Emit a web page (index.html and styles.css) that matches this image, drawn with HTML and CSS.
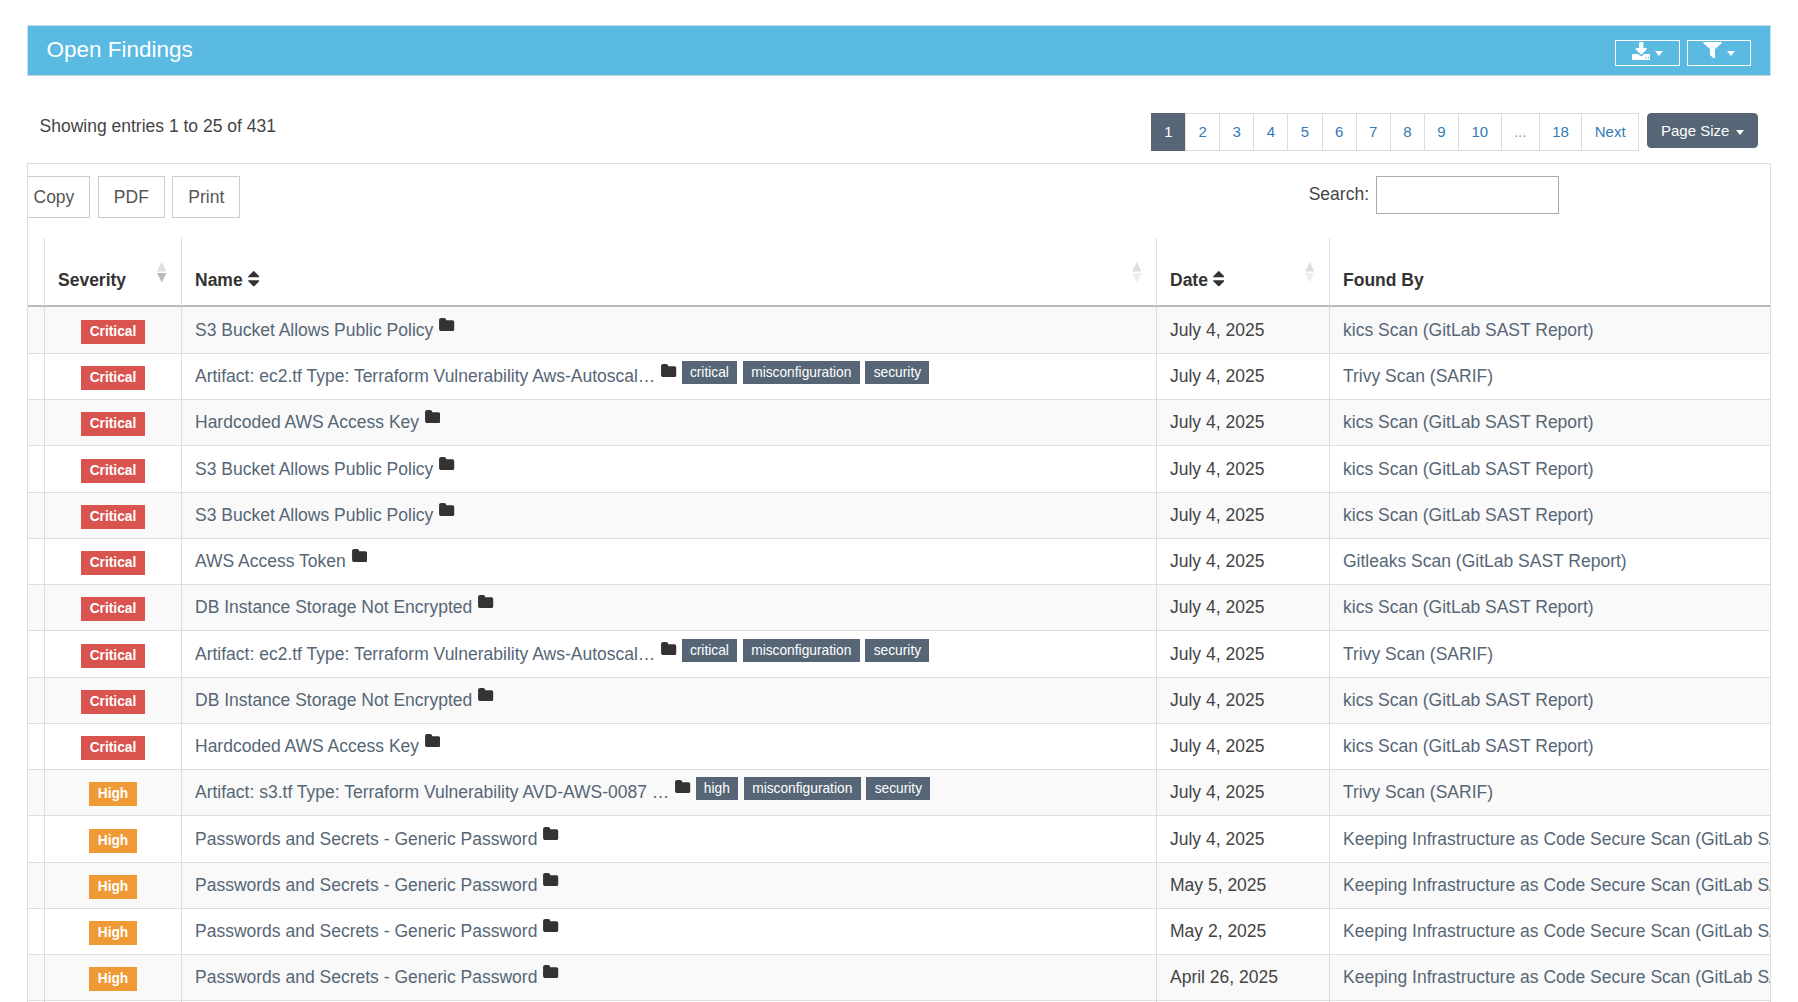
FILE: index.html
```html
<!DOCTYPE html>
<html lang="en">

<head>
  <meta charset="UTF-8">
  <title>Open Findings</title>
  <link rel="stylesheet" href="styles.css">
</head>

<body>
  <svg class="sprite" aria-hidden="true">
    <symbol id="i-folder" viewBox="64 128 1664 1408"><path d="M1728 608v704q0 92-66 158t-158 66h-1216q-92 0-158-66t-66-158v-960q0-92 66-158t158-66h320q92 0 158 66t66 158v32h672q92 0 158 66t66 158z"/></symbol>
    <symbol id="i-sort" viewBox="384 192 1024 1408"><path d="M1408 1088q0 26-19 45l-448 448q-19 19-45 19t-45-19l-448-448q-19-19-19-45t19-45 45-19h896q26 0 45 19t19 45zm0-384q0 26-19 45t-45 19h-896q-26 0-45-19t-19-45 19-45l448-448q19-19 45-19t45 19l448 448q19 19 19 45z"/></symbol>
    <symbol id="i-download" viewBox="64 0 1664 1536" preserveAspectRatio="none"><path d="M1344 1344q0-26-19-45t-45-19-45 19-19 45 19 45 45 19 45-19 19-45zm256 0q0-26-19-45t-45-19-45 19-19 45 19 45 45 19 45-19 19-45zm128-224v320q0 40-28 68t-68 28h-1472q-40 0-68-28t-28-68v-320q0-40 28-68t68-28h465l135 136q58 56 136 56t136-56l136-136h464q40 0 68 28t28 68zm-325-569q17 41-14 70l-448 448q-18 19-45 19t-45-19l-448-448q-31-29-14-70 17-39 59-39h256v-448q0-26 19-45t45-19h256q26 0 45 19t19 45v448h256q42 0 59 39z"/></symbol>
    <symbol id="i-filter" viewBox="183 256 1426 1408" preserveAspectRatio="none"><path d="M1595 295q17 41-14 70l-493 493v742q0 42-39 59-13 5-25 5-27 0-45-19l-256-256q-19-19-19-45v-486l-493-493q-31-29-14-70 17-39 59-39h1280q42 0 59 39z"/></symbol>
  </svg>

  <div class="page">
    <div class="panel-heading">
      <h3 class="panel-title">Open Findings</h3>
      <div class="panel-actions">
        <button class="outline-btn"><svg class="icon-download"><use href="#i-download"/></svg><span class="caret"></span></button>
        <button class="outline-btn"><svg class="icon-filter"><use href="#i-filter"/></svg><span class="caret"></span></button>
      </div>
    </div>

    <div class="paging-bar">
      <div class="entries">Showing entries 1 to 25 of 431</div>
      <ul class="pagination">
        <li class="active"><a href="#">1</a></li>
        <li><a href="#">2</a></li>
        <li><a href="#">3</a></li>
        <li><a href="#">4</a></li>
        <li><a href="#">5</a></li>
        <li><a href="#">6</a></li>
        <li><a href="#">7</a></li>
        <li><a href="#">8</a></li>
        <li><a href="#">9</a></li>
        <li><a href="#">10</a></li>
        <li class="muted"><a href="#">...</a></li>
        <li><a href="#">18</a></li>
        <li><a href="#">Next</a></li>
      </ul>
      <button class="page-size">Page Size <span class="caret"></span></button>
    </div>

    <div class="table-box">
      <div class="table-tools">
        <div class="export-btns">
          <button class="export-btn export-copy">Copy</button>
          <button class="export-btn">PDF</button>
          <button class="export-btn export-print">Print</button>
        </div>
        <label class="search">Search: <input type="text" class="search-input"></label>
      </div>

      <table class="findings">
        <colgroup>
          <col class="col-check">
          <col class="col-severity">
          <col class="col-name">
          <col class="col-date">
          <col>
        </colgroup>
        <thead>
          <tr>
            <th></th>
            <th>Severity<span class="sorter sorter-active"><svg viewBox="0 0 10 10"><polygon class="up" points="5,0 10,10 0,10"/></svg><svg viewBox="0 0 10 10"><polygon class="down" points="0,0 10,0 5,10"/></svg></span></th>
            <th>Name <svg class="icon-sort"><use href="#i-sort"/></svg><span class="sorter"><svg viewBox="0 0 10 10"><polygon class="up" points="5,0 10,10 0,10"/></svg><svg viewBox="0 0 10 10"><polygon class="down" points="0,0 10,0 5,10"/></svg></span></th>
            <th>Date <svg class="icon-sort"><use href="#i-sort"/></svg><span class="sorter"><svg viewBox="0 0 10 10"><polygon class="up" points="5,0 10,10 0,10"/></svg><svg viewBox="0 0 10 10"><polygon class="down" points="0,0 10,0 5,10"/></svg></span></th>
            <th>Found By</th>
          </tr>
        </thead>
        <tbody>
          <tr>
            <td></td>
            <td class="sev"><span class="badge critical">Critical</span></td>
            <td><a href="#">S3 Bucket Allows Public Policy</a> <svg class="icon-folder"><use href="#i-folder"/></svg></td>
            <td class="date">July 4, 2025</td>
            <td><a href="#">kics Scan (GitLab SAST Report)</a></td>
          </tr>
          <tr>
            <td></td>
            <td class="sev"><span class="badge critical">Critical</span></td>
            <td><a href="#">Artifact: ec2.tf Type: Terraform Vulnerability Aws-Autoscal…</a> <svg class="icon-folder"><use href="#i-folder"/></svg> <span class="tag">critical</span> <span class="tag">misconfiguration</span> <span class="tag">security</span></td>
            <td class="date">July 4, 2025</td>
            <td><a href="#">Trivy Scan (SARIF)</a></td>
          </tr>
          <tr>
            <td></td>
            <td class="sev"><span class="badge critical">Critical</span></td>
            <td><a href="#">Hardcoded AWS Access Key</a> <svg class="icon-folder"><use href="#i-folder"/></svg></td>
            <td class="date">July 4, 2025</td>
            <td><a href="#">kics Scan (GitLab SAST Report)</a></td>
          </tr>
          <tr>
            <td></td>
            <td class="sev"><span class="badge critical">Critical</span></td>
            <td><a href="#">S3 Bucket Allows Public Policy</a> <svg class="icon-folder"><use href="#i-folder"/></svg></td>
            <td class="date">July 4, 2025</td>
            <td><a href="#">kics Scan (GitLab SAST Report)</a></td>
          </tr>
          <tr>
            <td></td>
            <td class="sev"><span class="badge critical">Critical</span></td>
            <td><a href="#">S3 Bucket Allows Public Policy</a> <svg class="icon-folder"><use href="#i-folder"/></svg></td>
            <td class="date">July 4, 2025</td>
            <td><a href="#">kics Scan (GitLab SAST Report)</a></td>
          </tr>
          <tr>
            <td></td>
            <td class="sev"><span class="badge critical">Critical</span></td>
            <td><a href="#">AWS Access Token</a> <svg class="icon-folder"><use href="#i-folder"/></svg></td>
            <td class="date">July 4, 2025</td>
            <td><a href="#">Gitleaks Scan (GitLab SAST Report)</a></td>
          </tr>
          <tr>
            <td></td>
            <td class="sev"><span class="badge critical">Critical</span></td>
            <td><a href="#">DB Instance Storage Not Encrypted</a> <svg class="icon-folder"><use href="#i-folder"/></svg></td>
            <td class="date">July 4, 2025</td>
            <td><a href="#">kics Scan (GitLab SAST Report)</a></td>
          </tr>
          <tr>
            <td></td>
            <td class="sev"><span class="badge critical">Critical</span></td>
            <td><a href="#">Artifact: ec2.tf Type: Terraform Vulnerability Aws-Autoscal…</a> <svg class="icon-folder"><use href="#i-folder"/></svg> <span class="tag">critical</span> <span class="tag">misconfiguration</span> <span class="tag">security</span></td>
            <td class="date">July 4, 2025</td>
            <td><a href="#">Trivy Scan (SARIF)</a></td>
          </tr>
          <tr>
            <td></td>
            <td class="sev"><span class="badge critical">Critical</span></td>
            <td><a href="#">DB Instance Storage Not Encrypted</a> <svg class="icon-folder"><use href="#i-folder"/></svg></td>
            <td class="date">July 4, 2025</td>
            <td><a href="#">kics Scan (GitLab SAST Report)</a></td>
          </tr>
          <tr>
            <td></td>
            <td class="sev"><span class="badge critical">Critical</span></td>
            <td><a href="#">Hardcoded AWS Access Key</a> <svg class="icon-folder"><use href="#i-folder"/></svg></td>
            <td class="date">July 4, 2025</td>
            <td><a href="#">kics Scan (GitLab SAST Report)</a></td>
          </tr>
          <tr>
            <td></td>
            <td class="sev"><span class="badge high">High</span></td>
            <td><a href="#">Artifact: s3.tf Type: Terraform Vulnerability AVD-AWS-0087 …</a> <svg class="icon-folder"><use href="#i-folder"/></svg> <span class="tag">high</span> <span class="tag">misconfiguration</span> <span class="tag">security</span></td>
            <td class="date">July 4, 2025</td>
            <td><a href="#">Trivy Scan (SARIF)</a></td>
          </tr>
          <tr>
            <td></td>
            <td class="sev"><span class="badge high">High</span></td>
            <td><a href="#">Passwords and Secrets - Generic Password</a> <svg class="icon-folder"><use href="#i-folder"/></svg></td>
            <td class="date">July 4, 2025</td>
            <td><a href="#">Keeping Infrastructure as Code Secure Scan (GitLab SAST Report)</a></td>
          </tr>
          <tr>
            <td></td>
            <td class="sev"><span class="badge high">High</span></td>
            <td><a href="#">Passwords and Secrets - Generic Password</a> <svg class="icon-folder"><use href="#i-folder"/></svg></td>
            <td class="date">May 5, 2025</td>
            <td><a href="#">Keeping Infrastructure as Code Secure Scan (GitLab SAST Report)</a></td>
          </tr>
          <tr>
            <td></td>
            <td class="sev"><span class="badge high">High</span></td>
            <td><a href="#">Passwords and Secrets - Generic Password</a> <svg class="icon-folder"><use href="#i-folder"/></svg></td>
            <td class="date">May 2, 2025</td>
            <td><a href="#">Keeping Infrastructure as Code Secure Scan (GitLab SAST Report)</a></td>
          </tr>
          <tr>
            <td></td>
            <td class="sev"><span class="badge high">High</span></td>
            <td><a href="#">Passwords and Secrets - Generic Password</a> <svg class="icon-folder"><use href="#i-folder"/></svg></td>
            <td class="date">April 26, 2025</td>
            <td><a href="#">Keeping Infrastructure as Code Secure Scan (GitLab SAST Report)</a></td>
          </tr>
          <tr>
            <td></td>
            <td class="sev"><span class="badge high">High</span></td>
            <td><a href="#">Passwords and Secrets - Generic Password</a> <svg class="icon-folder"><use href="#i-folder"/></svg></td>
            <td class="date">April 26, 2025</td>
            <td><a href="#">Keeping Infrastructure as Code Secure Scan (GitLab SAST Report)</a></td>
          </tr>
        </tbody>
      </table>
    </div>
  </div>
</body>

</html>
```

FILE: styles.css
```css
:root {
    --slate: #566676;
    --line: #ddd;
    --link: #337ab7;
    --text: #444;
}

html,
body {
    height: 100%;
    margin: 0;
    padding: 0;
}

body {
    background-color: #fff;
    color: var(--text);
    font-family: "Liberation Sans", Arial, sans-serif;
    font-size: 17.5px;
    line-height: 25px;
    overflow: hidden;
}

a {
    color: var(--slate);
    text-decoration: none;
}

button {
    font-family: inherit;
    cursor: pointer;
}

.sprite {
    display: none;
}

.page {
    box-sizing: border-box;
    height: 100vh;
    padding: 25px 27px 0 27px;
    overflow: hidden;
}

.panel-heading {
    display: flex;
    justify-content: space-between;
    align-items: center;
    box-sizing: border-box;
    height: 51px;
    padding: 0 19px 3px 18.5px;
    background-color: #5abae2;
    border: 1px solid #c4dfec;
    border-bottom-color: #c9ced2;
}

.panel-title {
    margin: 0;
    color: #fff;
    font-size: 22.5px;
    font-weight: normal;
    line-height: 25px;
}

.panel-actions {
    display: flex;
    gap: 7px;
    margin-top: 8px;
}

.outline-btn {
    display: flex;
    justify-content: center;
    align-items: center;
    gap: 4.5px;
    box-sizing: border-box;
    width: 64.5px;
    height: 26.5px;
    padding: 0;
    background: transparent;
    border: 1px solid #fff;
}

.outline-btn svg {
    fill: #fff;
}

.icon-download {
    width: 18.5px;
    height: 18px;
    margin-top: -5px;
}

.icon-filter {
    width: 19px;
    height: 16.5px;
    margin-top: -5px;
}

.caret {
    display: inline-block;
    width: 0;
    height: 0;
    border-top: 5px solid #fff;
    border-left: 4.5px solid transparent;
    border-right: 4.5px solid transparent;
    vertical-align: middle;
}

.paging-bar {
    display: flex;
    align-items: flex-start;
    height: 50px;
    margin-top: 37px;
    padding: 0 13.5px 0 12.5px;
}

.entries {
    flex: 1;
    padding-top: 1px;
    line-height: 25px;
}

.pagination {
    display: flex;
    margin: 0 8.5px 0 0;
    padding: 0;
    list-style: none;
    font-size: 15px;
    line-height: 22.5px;
}

.pagination li a {
    display: block;
    margin-left: -1px;
    padding: 6.5px 12.4px;
    background-color: #fff;
    border: 1px solid var(--line);
    color: var(--link);
}

.pagination li.active a {
    background-color: var(--slate);
    border-color: var(--slate);
    color: #fff;
}

.pagination li.muted a {
    color: #8a97a5;
}

.page-size {
    height: 34.5px;
    padding: 2px 13px 0 12.5px;
    background-color: var(--slate);
    border: 1px solid var(--slate);
    border-radius: 4px;
    color: #fff;
    font-size: 15px;
    line-height: 22.5px;
    white-space: nowrap;
}

.page-size .caret {
    margin-left: 2px;
}

.table-box {
    height: 1000px;
    background-color: #fff;
    border: 1px solid var(--line);
    overflow: hidden;
}

.table-tools {
    display: flex;
    justify-content: space-between;
    align-items: flex-start;
    height: 62px;
    padding-top: 12px;
}

.export-btns {
    display: flex;
    gap: 7.5px;
    margin-left: -10.5px;
}

.export-btn {
    box-sizing: border-box;
    height: 42px;
    padding: 0 15px;
    background-color: #fff;
    border: 1px solid #ccc;
    color: #555;
    font-size: 17.5px;
}

.search {
    display: flex;
    align-items: center;
    gap: 7px;
    margin-right: 211px;
}

.search-input {
    box-sizing: border-box;
    width: 183px;
    height: 37.5px;
    padding: 0 6px;
    background-color: #fff;
    border: 1px solid #aaa;
    border-radius: 0;
}

.findings {
    width: 100%;
    border-collapse: separate;
    border-spacing: 0;
    table-layout: fixed;
}

.col-check {
    width: 16px;
}

.col-severity {
    width: 137px;
}

.col-name {
    width: 975px;
}

.col-date {
    width: 173px;
}

.findings th {
    position: relative;
    box-sizing: border-box;
    height: 69px;
    padding: 0 13px 12.5px;
    border-left: 1px solid var(--line);
    border-bottom: 2px solid #bbb;
    color: #333;
    text-align: left;
    vertical-align: bottom;
}

.findings th:first-child,
.findings td:first-child {
    border-left: none;
}

.findings td {
    box-sizing: border-box;
    height: 46px;
    padding: 10px 13px;
    border-left: 1px solid var(--line);
    border-top: 1px solid var(--line);
    white-space: nowrap;
    overflow: hidden;
}

/* rows are 46.25 apart in the original, table rows snap to whole px */
.findings tbody tr:nth-child(4n) td {
    height: 47px;
}

.findings tbody tr:first-child td {
    border-top: none;
}

.findings tbody tr:nth-child(odd) {
    background-color: #f9f9f9;
}

.findings td.date {
    color: var(--text);
}

.findings td.sev {
    text-align: center;
}

.badge {
    padding: 4px 9px 5px;
    color: #fff;
    font-size: 13.75px;
    font-weight: bold;
    line-height: 1;
}

.critical {
    background-color: #d9534f;
}

.high {
    background-color: #f09a36;
}

.tag {
    margin-right: 1px;
    padding: 4px 8.25px;
    background-color: var(--slate);
    color: #fff;
    font-size: 13.75px;
    line-height: 1;
    vertical-align: 5px;
}

.icon-folder {
    width: 15.5px;
    height: 13px;
    margin-left: 1px;
    fill: #333;
    vertical-align: 5px;
}

.icon-sort {
    width: 11.5px;
    height: 15.5px;
    fill: #333;
    vertical-align: -1px;
}

.sorter {
    position: absolute;
    top: 24px;
    right: 15px;
    display: flex;
    flex-direction: column;
    gap: 1px;
    width: 9.5px;
}

.sorter svg {
    display: block;
    width: 9.5px;
    height: 9.5px;
}

.sorter .up {
    fill: #dedede;
}

.sorter .down {
    fill: #eee;
}

.sorter-active .down {
    fill: #bbb;
}
```
